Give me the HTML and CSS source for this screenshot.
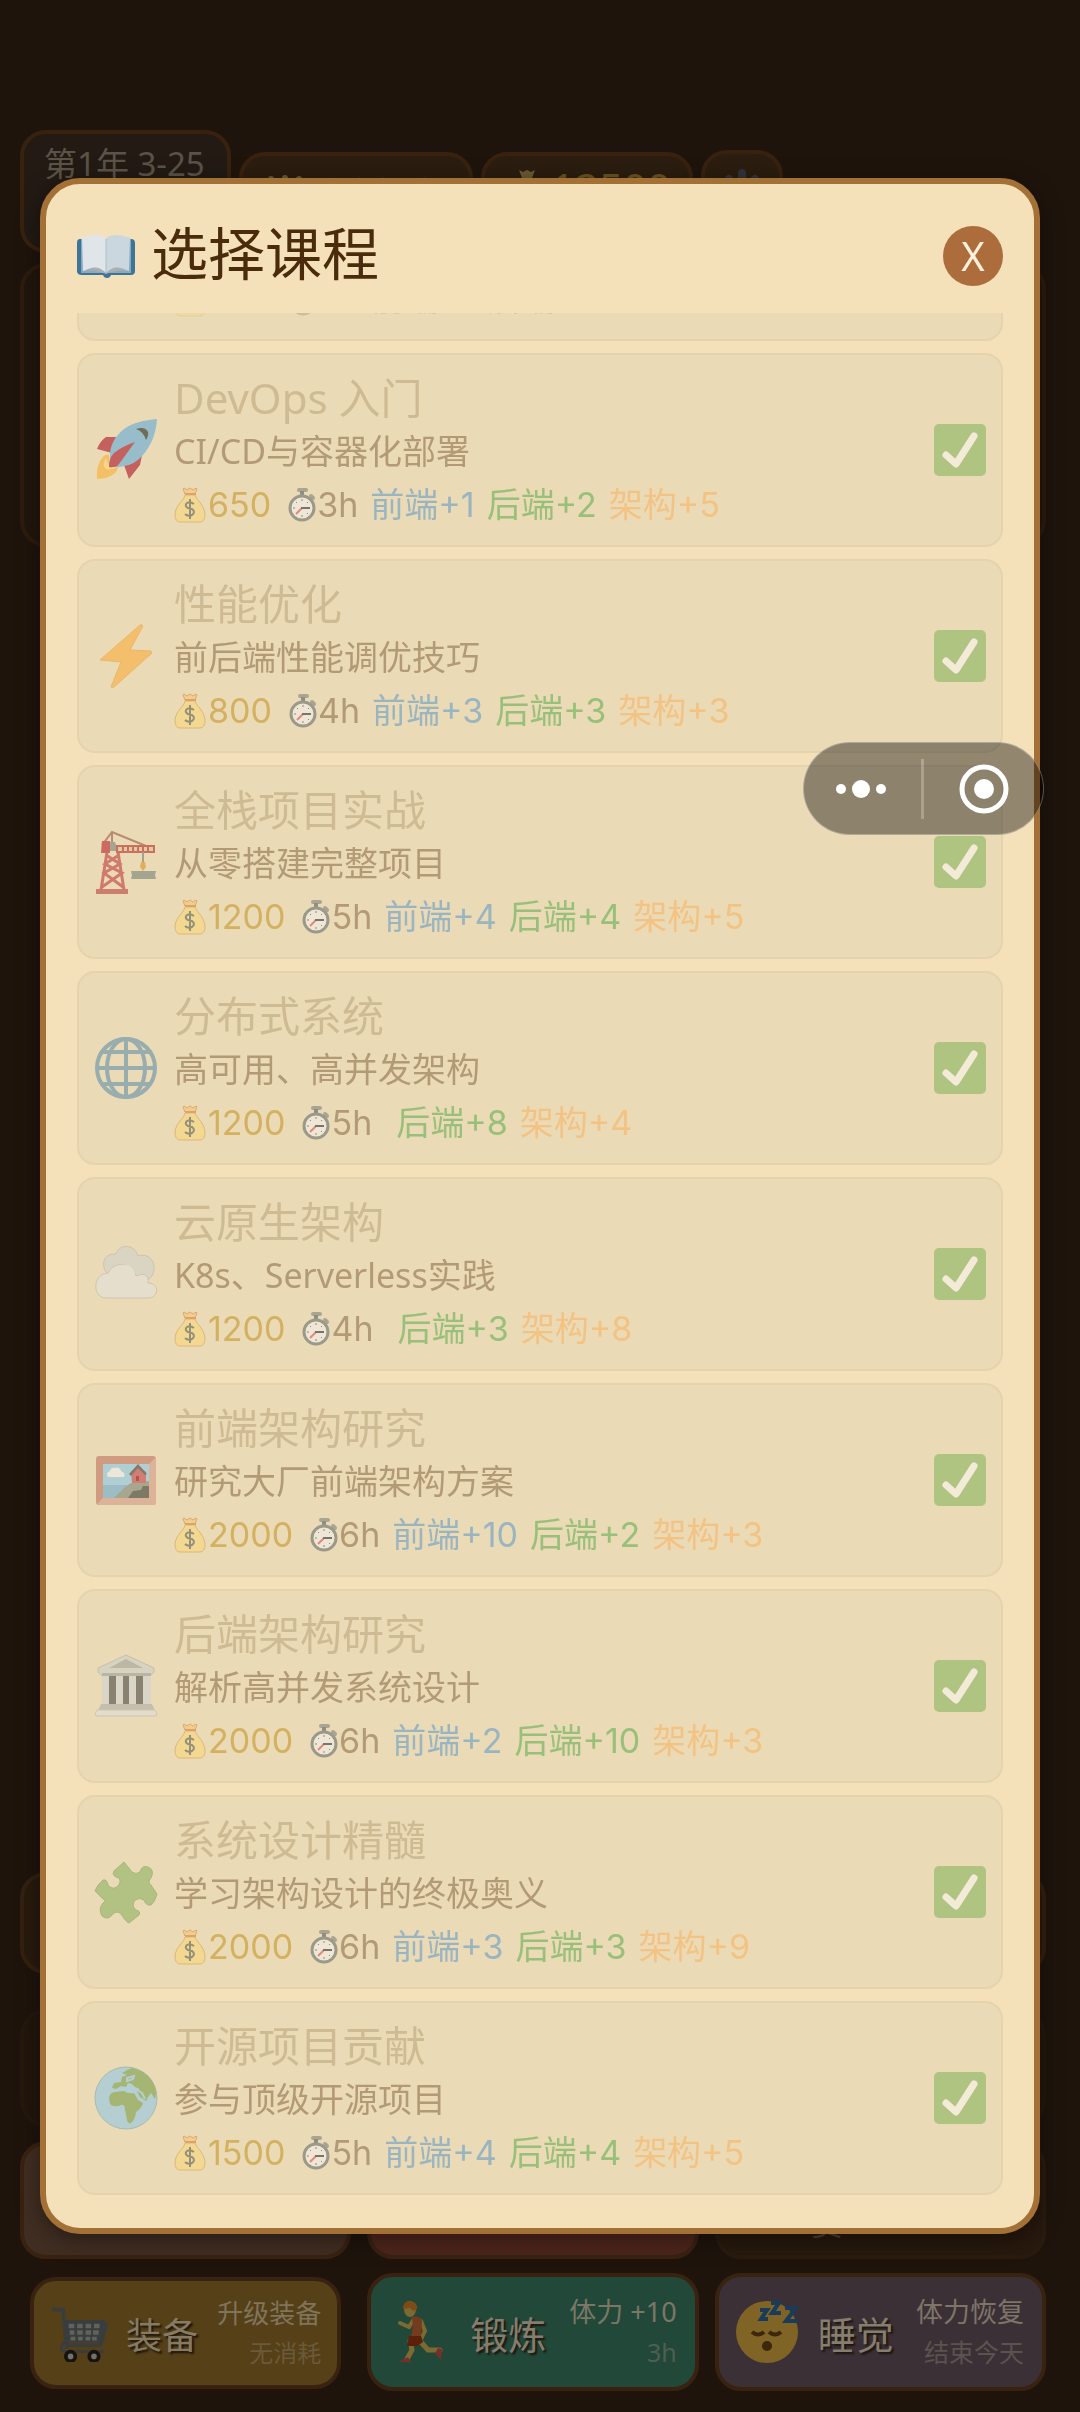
FILE: index.html
```html
<!DOCTYPE html>
<html lang="zh-CN">
<head>
<meta charset="utf-8">
<meta name="viewport" content="width=device-width, initial-scale=1">
<title>选择课程</title>
<link rel="stylesheet" href="styles.css">
</head>
<body>
<svg class="sprite" aria-hidden="true">
  <symbol id="bag" viewBox="0 0 34 36">
    <path d="M10 1l3 2 3-2 3 2 3-2 1 1-2 5H11L9 2z" fill="#f0cf8c" stroke="#dda86f"/>
    <path d="M11 8C10 14 2 17 1 27q0 8 5 8h20q5 0 5-8C30 17 23 14 21 8z" fill="#f3d891" stroke="#dcb77a"/>
    <path d="M11 7h11" stroke="#e0a070" stroke-width="2"/>
    <path d="M20 17q-4-3-7-1-3 3 1 5l4 1q4 3 0 6-4 2-7-1M16 12v20" fill="none" stroke="#94917a" stroke-width="2"/>
  </symbol>
  <symbol id="watch" viewBox="0 0 34 36">
    <rect x="14" y="1" width="11" height="4" rx="2" fill="#aaa593"/>
    <path d="M19 4v5" stroke="#8f8e80" stroke-width="4"/><path d="M28 9l2 2" stroke="#aaa593" stroke-width="4" stroke-linecap="round"/>
    <circle cx="19" cy="21" r="12" fill="#efe6d6" stroke="#9b998a" stroke-width="3"/>
    <path d="M19 12v2M19 28v2M10 21h2M13 15l1 1M25 15l-1 1M13 27l1-1M25 27l-1-1" stroke="#8d8b7c"/>
    <path d="M19 21l-6 6" stroke="#e08a7c" stroke-width="2"/><path d="M18 21h9" stroke="#77756a" stroke-width="2"/>
  </symbol>
  <symbol id="check" viewBox="0 0 52 52">
    <rect width="52" height="52" rx="5" fill="#b0c482"/>
    <path d="M12 31l10 9 18-28" fill="none" stroke="#f3ebd8" stroke-width="7" stroke-linecap="round" stroke-linejoin="round"/>
  </symbol>
</svg>

<div class="game">
  <header class="status">
    <div class="pill pill-date">第1年 3-25</div>
    <div class="pill pill-title">
      <svg class="pill-icon" viewBox="0 0 36 36" aria-hidden="true"><path d="M4 8l7 9 7-13 7 13 7-9-3 22H7z"/><circle cx="4" cy="5" r="3"/><circle cx="18" cy="4" r="3"/><circle cx="32" cy="5" r="3"/></svg>
      首席极客
    </div>
    <div class="pill pill-money">
      <svg class="pill-icon" viewBox="0 0 36 36" aria-hidden="true"><path d="M10 0l4 2 4-2 4 2 4-2-3 8H13zM12 10h12c2 8 9 8 9 20q0 5-5 5H8q-5 0-5-5c0-12 7-12 9-20z"/></svg>
      12500
    </div>
    <button class="pill pill-settings" aria-label="设置">
      <svg viewBox="0 0 48 48" aria-hidden="true"><g stroke="#32323a" stroke-width="8" stroke-linecap="round"><path d="M24 5v38M5 24h38M11 11l26 26M37 11L11 37"/></g><circle cx="24" cy="24" r="15" fill="#32323a"/><circle cx="24" cy="24" r="7" fill="#2b1d0f"/></svg>
    </button>
  </header>
  <section class="scene"></section>
  <section class="log"></section>
  <div class="actions">
    <div class="action action-locked"></div><div class="action action-locked"></div><div class="action action-locked"></div>
    <div class="action action-code"></div>
    <div class="action action-work"></div>
    <div class="action action-off"><span class="wrap-name">比赛</span></div>
    <button class="action action-gear">
      <svg class="action-icon" viewBox="0 0 62 62" aria-hidden="true">
        <path d="M2 6h12l4 42M18 22h42l-6 22H20" fill="none" stroke="#3a3d3e" stroke-width="4"/>
        <path d="M15 17h44l-5 24H18z" fill="#3a3d3e"/>
        <g fill="#62615c"><path d="M20 21h6v5h-6zM29 21h6v5h-6zM38 21h6v5h-6zM47 21h6v5h-6zM21 28h5v5h-5zM29 28h6v5h-6zM38 28h6v5h-6zM46 28h6v5h-6zM22 35h5v4h-5zM30 35h5v4h-5zM38 35h5v4h-5zM45 35h5v4h-5z"/></g>
        <path d="M16 40q-8 8 0 11h42" fill="none" stroke="#3a3d3e" stroke-width="3"/>
        <circle cx="22" cy="56" r="5" fill="#73716a" stroke="#17130e" stroke-width="4"/><circle cx="47" cy="56" r="5" fill="#73716a" stroke="#17130e" stroke-width="4"/>
      </svg>
      <span class="action-name">装备</span>
      <span class="action-info"><span>升级装备</span><small>无消耗</small></span>
    </button>
    <button class="action action-train">
      <svg class="action-icon" viewBox="0 0 62 62" aria-hidden="true">
        <path d="M26 18l-5 8-9-4M33 20l4 10-4 8" fill="none" stroke="#7d6a32" stroke-width="4" stroke-linecap="round"/>
        <path d="M22 40l2 9-5 9M32 40l8 9h12" fill="none" stroke="#7d6a32" stroke-width="5" stroke-linecap="round"/>
        <path d="M24 16q7-2 10 3l-1 18H22q4-8 2-21z" fill="#743b1f"/>
        <path d="M21 35h12l2 6-6 4H19z" fill="#5c2008"/>
        <ellipse cx="22" cy="8" rx="6" ry="8" fill="#7d6a32"/><path d="M15 8q0-8 7-8 8 1 7 8l-4 2-3-3z" fill="#7c4c14"/>
        <path d="M12 60l8-4 3 5H11zM50 47l4 1-1 11-6-7z" fill="#76302a"/>
      </svg>
      <span class="action-name">锻炼</span>
      <span class="action-info"><span>体力 +10</span><small>3h</small></span>
    </button>
    <button class="action action-sleep">
      <svg class="action-icon" viewBox="0 0 62 62" aria-hidden="true">
        <circle cx="31" cy="31" r="31" fill="#806425"/>
        <path d="M16 31q6 5 12 0M33 31q6 5 12 0" fill="none" stroke="#3c260c" stroke-width="4"/><ellipse cx="31" cy="45" rx="5" ry="5" fill="#3c260c"/>
        <path d="M24 9h7l-6 9h7M35 2h8l-7 10h9M49 7h11L50 20h12" fill="none" stroke="#193c5a" stroke-width="4"/>
      </svg>
      <span class="action-name">睡觉</span>
      <span class="action-info"><span>体力恢复</span><small>结束今天</small></span>
    </button>
  </div>
</div>

<div class="overlay">
<section class="modal" role="dialog" aria-labelledby="modal-title">
  <header class="modal-head">
    <svg class="book" viewBox="0 0 60 44" aria-hidden="true">
      <path d="M3 5h51q4 0 4 4v28q0 4-4 4H34q-1 3-4 3t-4-3H5q-5 0-5-4V9q0-4 3-4z" fill="#3d7598"/>
      <path d="M4 5h50v34H4z" fill="#88a9be"/>
      <path d="M5 4l3-1C16 0 26 0 29 5v34c-5-5-13-5-23-2z" fill="#dfe5e9"/>
      <path d="M53 4l-3-1C42 0 32 0 29 5v34c5-5 13-5 23-2z" fill="#cbd7de"/>
      <path d="M7 37q13-8 22 2 9-10 22-2-10-2-22 3-12-5-22-3z" fill="#aaafb1"/>
      <path d="M29 5v34" stroke="#aebdc6" stroke-width="1"/>
    </svg>
    <h1 id="modal-title">选择课程</h1>
    <button class="close" aria-label="关闭">X</button>
  </header>
  <ul class="courses">
    <li class="course">
      <span class="course-icon"></span>
      <div class="course-text"><h2>数据结构</h2><p class="desc">常用结构与算法</p>
      <p class="meta"><span class="price"><svg><use href="#bag"/></svg>500</span><span class="time"><svg><use href="#watch"/></svg>3h</span><span class="fe">前端+1</span><span class="be">后端+2</span></p></div>
      <svg class="done" role="img" aria-label="已完成"><use href="#check"/></svg>
    </li>
    <li class="course">
      <svg class="course-icon" viewBox="0 0 64 64" aria-hidden="true">
        <path d="M22 19L12 19Q6 23 3 31L18 35zM48 37L46 47 35 61 30 47z" fill="#c4615e"/>
        <path d="M3 61q-1-10 3-18 5-8 9-6L15 47l9 2q-2 11-21 12z" fill="#f3c065"/><path d="M12 40q-4 6-1 10t12-1l-8-1z" fill="#f7d58c"/>
        <path d="M63 1C50 2 38 5 30 11 20 19 16 28 16 38L15 48Q24 50 30 48 40 47 48 38C57 28 62 16 63 1Z" fill="#96bdc9"/>
        <path d="M41 24Q29 28 20 35 15 40 15 49 22 50 25 46z" fill="#c4615e"/>
        <path d="M42 11q9-3 12 3 1 3-2 8-2-8-10-11z" fill="#706c58"/>
      </svg>
      <div class="course-text"><h2>DevOps 入门</h2><p class="desc">CI/CD与容器化部署</p>
      <p class="meta"><span class="price"><svg><use href="#bag"/></svg>650</span><span class="time"><svg><use href="#watch"/></svg>3h</span><span class="fe">前端+1</span><span class="be">后端+2</span><span class="ar">架构+5</span></p></div>
      <svg class="done" role="img" aria-label="已完成"><use href="#check"/></svg>
    </li>
    <li class="course">
      <svg class="course-icon" viewBox="0 0 64 64" aria-hidden="true"><path d="M46 1L6 36l21 2-10 25q1 1 3 0L58 29l-1-2-21-1L49 2q-1-2-3-1z" fill="#f4bf6c" stroke="#e8b76c"/></svg>
      <div class="course-text"><h2>性能优化</h2><p class="desc">前后端性能调优技巧</p>
      <p class="meta"><span class="price"><svg><use href="#bag"/></svg>800</span><span class="time"><svg><use href="#watch"/></svg>4h</span><span class="fe">前端+3</span><span class="be">后端+3</span><span class="ar">架构+3</span></p></div>
      <svg class="done" role="img" aria-label="已完成"><use href="#check"/></svg>
    </li>
    <li class="course">
      <svg class="course-icon" viewBox="0 0 64 64" aria-hidden="true">
        <path d="M8 15L18 2l34 14M18 2v14" fill="none" stroke="#b78c70" stroke-width="2"/>
        <path d="M2 59h32v5H2z" fill="#cb7e6c"/>
        <path d="M13 22L7 60M24 22l6 38M12 25l14 9-16 9 19 14M25 25l-14 9 17 9L8 57" fill="none" stroke="#cf7a6c" stroke-width="3"/>
        <path d="M8 11h8v12H7z" fill="#cf6a62"/><path d="M16 12h5l3 9h-8z" fill="#a7a491"/>
        <path d="M23 16h37v6H23zM29 16v6M34 16v6M39 16v6M44 16v6M49 16v6M54 16v6" fill="#e4c9a5" stroke="#c9705f" stroke-width="2"/>
        <path d="M49 22v12" stroke="#a6a08c" stroke-width="2"/><path d="M47 32h4l1 5-3 4-3-4z" fill="#e3ad5e"/>
        <path d="M37 41h25l-1 4 1 4H37l1-4z" fill="#a5a48f"/>
      </svg>
      <div class="course-text"><h2>全栈项目实战</h2><p class="desc">从零搭建完整项目</p>
      <p class="meta"><span class="price"><svg><use href="#bag"/></svg>1200</span><span class="time"><svg><use href="#watch"/></svg>5h</span><span class="fe">前端+4</span><span class="be">后端+4</span><span class="ar">架构+5</span></p></div>
      <svg class="done" role="img" aria-label="已完成"><use href="#check"/></svg>
    </li>
    <li class="course">
      <svg class="course-icon" viewBox="0 0 64 64" aria-hidden="true">
        <g fill="none" stroke="#98adae" stroke-width="4"><circle cx="32" cy="32" r="29"/><ellipse cx="32" cy="32" rx="19" ry="29"/><path d="M32 2v60M3 32h58M8 16h48M8 48h48"/></g>
      </svg>
      <div class="course-text"><h2>分布式系统</h2><p class="desc">高可用、高并发架构</p>
      <p class="meta"><span class="price"><svg><use href="#bag"/></svg>1200</span><span class="time"><svg><use href="#watch"/></svg>5h</span><span class="fe"></span><span class="be">后端+8</span><span class="ar">架构+4</span></p></div>
      <svg class="done" role="img" aria-label="已完成"><use href="#check"/></svg>
    </li>
    <li class="course">
      <svg class="course-icon" viewBox="0 0 64 64" aria-hidden="true">
        <path d="M12 30C6 20 12 11 22 12 25 2 40 1 44 14 56 10 64 22 58 34L50 42 20 38z" fill="#d9d5c2" stroke="#cdc4ac"/>
        <path d="M12 56C-2 56-2 32 14 31 20 20 34 18 42 34 52 30 55 34 54 41 66 41 65 56 54 56z" fill="#e5decc" stroke="#d0c6ae"/>
        <path d="M20 30C24 20 38 20 41 32L40 42H20z" fill="#e5decc"/>
      </svg>
      <div class="course-text"><h2>云原生架构</h2><p class="desc">K8s、Serverless实践</p>
      <p class="meta"><span class="price"><svg><use href="#bag"/></svg>1200</span><span class="time"><svg><use href="#watch"/></svg>4h</span><span class="fe"></span><span class="be">后端+3</span><span class="ar">架构+8</span></p></div>
      <svg class="done" role="img" aria-label="已完成"><use href="#check"/></svg>
    </li>
    <li class="course">
      <svg class="course-icon" viewBox="0 0 64 64" aria-hidden="true">
        <rect x="2" y="8" width="60" height="49" rx="3" fill="#cf9c82"/><path d="M62 9L55 16v34H9l-6 6 2 1h55q2 0 2-3z" fill="#dcb298"/>
        <path d="M9 16h46v34H9z" fill="#b0cfd3"/><path d="M9 37h24v13H9z" fill="#9cbdc6"/>
        <path d="M20 50l11-11 6-4 8-1 10-1v17z" fill="#a7a68e"/><path d="M34 50l5-7 8-1 2-4h6v12z" fill="#7d7965"/>
        <path d="M37 24l7-6 8 6v11H38z" fill="#d17e75"/><path d="M35 26l9-10 9 10-2 1-7-7-7 8z" fill="#85796b"/><path d="M42 28h3v5h-3z" fill="#b9524d"/>
        <path d="M14 29q-3-4 2-6 1-4 5-3 4-2 6 3 5 2 3 6z" fill="#eee6d8"/>
      </svg>
      <div class="course-text"><h2>前端架构研究</h2><p class="desc">研究大厂前端架构方案</p>
      <p class="meta"><span class="price"><svg><use href="#bag"/></svg>2000</span><span class="time"><svg><use href="#watch"/></svg>6h</span><span class="fe">前端+10</span><span class="be">后端+2</span><span class="ar">架构+3</span></p></div>
      <svg class="done" role="img" aria-label="已完成"><use href="#check"/></svg>
    </li>
    <li class="course">
      <svg class="course-icon" viewBox="0 0 64 64" aria-hidden="true">
        <path d="M32 1L60 14v4l-4 4H8l-4-4v-4z" fill="#d6d3c3" stroke="#c7bfa8"/><path d="M32 5L49 14H15z" fill="#bcb7a2"/>
        <path d="M8 20h49v32H8z" fill="#d9d6c7"/><path d="M8 19h49v3H8z" fill="#b9b5a2"/>
        <path d="M15 22h7v28h-7zM29 22h6v28h-6zM42 22h7v28h-7z" fill="#898270"/>
        <path d="M7 50h51l3 7H4z" fill="#c4bfad"/><path d="M3 56h58l2 4-1 2H2l-1-2z" fill="#e2dcca" stroke="#cfc5ad"/>
      </svg>
      <div class="course-text"><h2>后端架构研究</h2><p class="desc">解析高并发系统设计</p>
      <p class="meta"><span class="price"><svg><use href="#bag"/></svg>2000</span><span class="time"><svg><use href="#watch"/></svg>6h</span><span class="fe">前端+2</span><span class="be">后端+10</span><span class="ar">架构+3</span></p></div>
      <svg class="done" role="img" aria-label="已完成"><use href="#check"/></svg>
    </li>
    <li class="course">
      <svg class="course-icon" viewBox="0 0 64 64" aria-hidden="true">
        <path d="M30 2L38 12Q42 15 46 12 48 5 54 7 61 10 57 18 53 22 57 25L63 34Q61 42 57 45 52 46 50 40 46 37 41 40 37 46 42 50 47 51 45 55L35 63Q32 62 27 54 23 50 19 54 14 61 8 56 4 49 9 43 13 41 8 38L1 31Q3 25 9 20 13 19 14 25 18 30 23 27 28 22 25 18 17 16 20 11Z" fill="#b1c283" stroke="#a9b67c"/>
      </svg>
      <div class="course-text"><h2>系统设计精髓</h2><p class="desc">学习架构设计的终极奥义</p>
      <p class="meta"><span class="price"><svg><use href="#bag"/></svg>2000</span><span class="time"><svg><use href="#watch"/></svg>6h</span><span class="fe">前端+3</span><span class="be">后端+3</span><span class="ar">架构+9</span></p></div>
      <svg class="done" role="img" aria-label="已完成"><use href="#check"/></svg>
    </li>
    <li class="course">
      <svg class="course-icon" viewBox="0 0 64 64" aria-hidden="true">
        <circle cx="32" cy="32" r="31" fill="#b4ced1" stroke="#a6bcae"/>
        <path d="M15 32Q16 26 21 26L30 25Q34 28 40 27L44 34 49 37Q47 43 42 46 41 54 37 57 34 58 33 54 32 48 31 44 31 38 27 39 20 42 16 38z" fill="#a5b573"/>
        <path d="M38 2Q56 6 61 21 63 27 61 33L57 27 54 31 52 35 46 31 43 25 46 23 41 21 38 18 34 17 32 21 27 20 22 23 18 22 20 17 27 16 28 11 33 9 28 7 33 4z" fill="#a5b573"/>
        <path d="M33 12l7-2-1 3-6 2zM43 24l5 3 3 6" fill="none" stroke="#b4ced1" stroke-width="2"/>
      </svg>
      <div class="course-text"><h2>开源项目贡献</h2><p class="desc">参与顶级开源项目</p>
      <p class="meta"><span class="price"><svg><use href="#bag"/></svg>1500</span><span class="time"><svg><use href="#watch"/></svg>5h</span><span class="fe">前端+4</span><span class="be">后端+4</span><span class="ar">架构+5</span></p></div>
      <svg class="done" role="img" aria-label="已完成"><use href="#check"/></svg>
    </li>
  </ul>
</section>
</div>

<div class="capsule">
  <button aria-label="更多"><svg viewBox="0 0 50 50" aria-hidden="true"><g fill="#fff"><circle cx="5" cy="25" r="5"/><circle cx="25" cy="25" r="9"/><circle cx="45" cy="25" r="5"/></g></svg></button>
  <span class="capsule-line"></span>
  <button aria-label="退出"><svg viewBox="0 0 50 50" aria-hidden="true"><circle cx="25" cy="25" r="22" fill="none" stroke="#fff" stroke-width="5"/><circle cx="25" cy="25" r="10" fill="#fff"/></svg></button>
</div>
</body>
</html>
```

FILE: styles.css
```css
* { box-sizing: border-box; }
body {
  margin: 0;
  background: #1e140c;
  font-family: "Noto Sans", "Noto Sans CJK SC", sans-serif;
}
h1, h2, p, ul { margin: 0; padding: 0; font-weight: 400; }
ul { list-style: none; }
button { font: inherit; color: inherit; border: 0; background: none; padding: 0; }
svg { display: block; flex: none; }
.sprite { position: absolute; width: 0; height: 0; }

/* Game screen behind the dialog */
.game {
  min-height: 100vh;
  padding: 130px 34px 21px 20px;
  display: flex;
  flex-direction: column;
}
.status { display: flex; align-items: center; gap: 8px; }
.pill {
  flex: none;
  display: flex;
  align-items: center;
  gap: 6px;
  height: 80px;
  padding: 0 24px;
  border: 4px solid #39210f;
  border-radius: 26px;
  background: #2b1d0f;
  color: #5c4f38;
  font-size: 33px;
  white-space: nowrap;
}
.pill-date { width: 211px; height: 123px; padding: 8px 20px; align-items: flex-start; background: #221a13; color: #5b5248; line-height: 44px; }
.pill-title { width: 234px; }
.pill-money { width: 212px; color: #6a5220; font-size: 42px; padding: 0 24px 8px; }
.pill-settings { width: 82px; height: 84px; padding: 0 13px; }
.pill-settings svg { width: 48px; height: 48px; }
.pill-icon { width: 36px; height: 36px; fill: #6a5932; }
.scene { margin-top: 10px; height: 284px; border: 4px solid #2d1b0e; border-radius: 26px; background: #21160c; }
.log { margin-top: auto; height: 102px; border: 4px solid #342010; border-radius: 26px; background: #281a0d; }
.actions { margin-top: 35px; display: grid; grid-template-columns: repeat(3, minmax(0, 1fr)); gap: 14px 16px; }
.action {
  height: 118px;
  display: flex;
  align-items: center;
  gap: 20px;
  padding: 0 18px 0 17px;
  border: 4px solid #3a2211;
  border-radius: 26px;
  color: #857d6d;
  white-space: nowrap;
}
.action-locked { background: #22160c; border-color: #25180d; }
.action-code { background: #412e22; }
.action-work { background: #4d261c; }
.action-off { background: #27190d; border-color: #2a1b0e; padding-left: 92px; color: #4f4433; }
.wrap-name { width: 32px; font-size: 32px; line-height: 46px; white-space: normal; }
.action-gear { height: 112px; margin: 4px 10px 2px; padding: 0 16px; gap: 18px; background: #554018; color: #857a62; }
.action-train { background: #224839; }
.action-sleep { background: #3c3037; }
.action-icon { width: 62px; height: 62px; }
.action-name { font-size: 38px; text-shadow: 2px 2px 2px #1e140c; }
.action-info { margin-left: auto; display: flex; flex-direction: column; align-items: flex-end; font-size: 27px; line-height: 40px; opacity: .9; }
.action-info small { font-size: 25px; opacity: .5; }
.action-gear .action-icon { width: 58px; height: 58px; }
.action-gear .action-name { font-size: 36px; }
.action-gear .action-info { font-size: 26px; }
.action-gear small { font-size: 24px; }

/* Dialog */
.overlay { position: fixed; inset: 0; padding: 178px 40px; }
.modal {
  height: 100%;
  display: flex;
  flex-direction: column;
  padding: 0 31px 33px;
  border: 6px solid #a37036;
  border-radius: 40px;
  background: #f4e0b9;
  box-shadow: 0 6px 24px rgba(0, 0, 0, .4);
}
.modal-head { display: flex; align-items: center; gap: 14px; padding: 42px 0 27px; color: #4a2c0d; }
.modal-head h1 { padding-bottom: 6px; font-size: 57px; line-height: 54px; }
.book { width: 60px; height: 44px; }
.close {
  margin-left: auto;
  width: 60px;
  height: 60px;
  border-radius: 50%;
  background: #ad6c3b;
  color: #fdf1dc;
  font-size: 40px;
  line-height: 60px;
}
.courses {
  flex: 1;
  min-height: 0;
  overflow: hidden;
  display: flex;
  flex-direction: column;
  justify-content: flex-end;
  gap: 12px;
}
.course {
  flex: none;
  display: flex;
  align-items: center;
  gap: 16px;
  padding: 15px;
  border: 2px solid #e5d3ae;
  border-radius: 18px;
  background: #ebdab6;
}
.course-icon { width: 64px; height: 64px; }
.course-text { flex: 1; color: #b39a76; font-size: 34px; }
.course-text h2 { font-size: 42px; line-height: 56px; color: #cfbb93; }
.desc { line-height: 50px; }
.meta { display: flex; gap: 12px; margin-top: 4px; font-family: Inter, "Noto Sans CJK SC", sans-serif; line-height: 50px; }
.meta span { display: flex; align-items: center; }
.meta svg { width: 34px; height: 36px; }
.course:first-child .meta { opacity: .4; }
.price { color: #d3b160; }
.fe { color: #9ab5bf; }
.be { color: #99c07a; }
.ar { color: #f3c384; }
.done { width: 52px; height: 52px; }

/* Floating host-app capsule */
.capsule {
  position: fixed;
  top: 742px;
  right: 36px;
  width: 241px;
  height: 93px;
  display: flex;
  align-items: center;
  justify-content: space-between;
  padding: 0 34px 0 32px;
  border: 1px solid rgba(255, 255, 255, .3);
  border-radius: 47px;
  background: rgba(0, 0, 0, .4);
}
.capsule svg { width: 50px; height: 50px; }
.capsule-line { width: 3px; height: 60px; background: rgba(255, 255, 255, .25); }
```
